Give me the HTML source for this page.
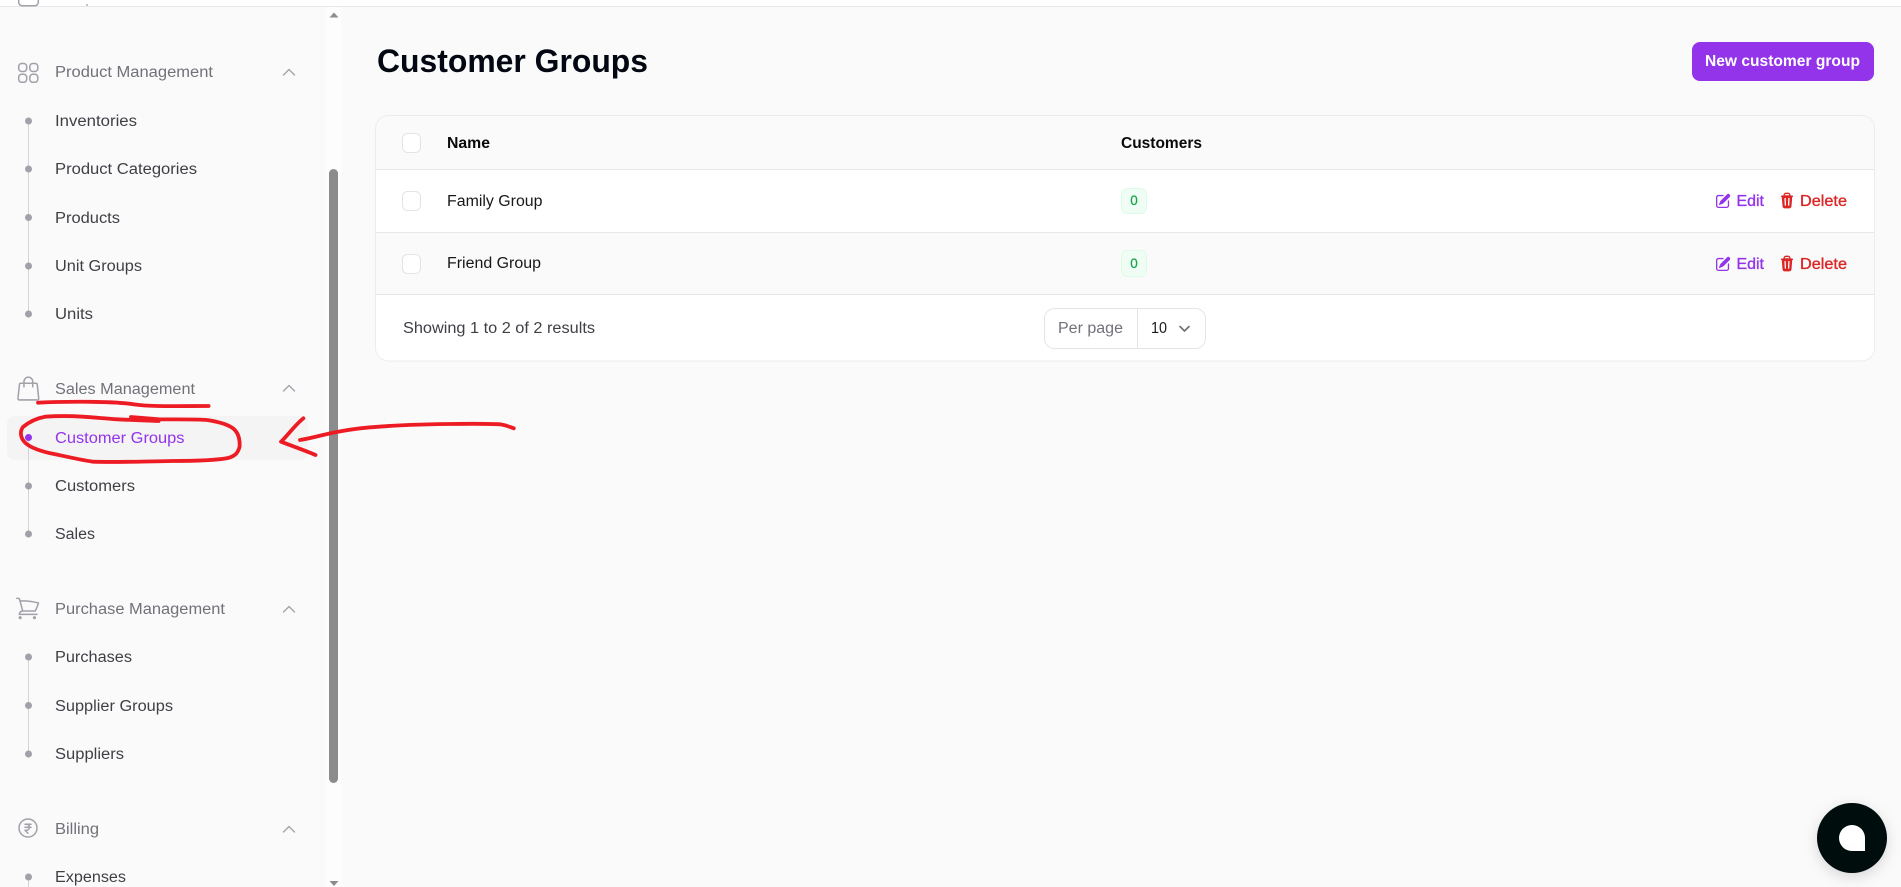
<!DOCTYPE html>
<html lang="en"><head><meta charset="utf-8"><title>Customer Groups</title>
<style>
html,body{margin:0;padding:0;width:1901px;height:887px;overflow:hidden;background:#fafafa}
svg{display:block;font-family:"Liberation Sans",sans-serif}
.n{font-size:15.5px;fill:#3f3f46}
.g{font-size:15.5px;fill:#71717a}
.b{font-size:15.5px;font-weight:700;fill:#09090b}
.t{font-size:15.5px;fill:#18181b}
.i{fill:none;stroke:#a1a1aa;stroke-width:1.5;stroke-linecap:round;stroke-linejoin:round}
.c{fill:none;stroke:#a1a1aa;stroke-width:1.3;stroke-linecap:round;stroke-linejoin:round}
.d{fill:#a1a1aa}
.l{stroke:#d4d4d8;stroke-width:1}
.cb{fill:#fff;stroke:#e4e4e7;stroke-width:1}
.r{fill:none;stroke:#ed1c24;stroke-width:3.8;stroke-linecap:round;stroke-linejoin:round}
.e{font-size:15.5px;fill:#9333ea;stroke:#9333ea;stroke-width:.35}
.x{font-size:15.5px;fill:#dc2626;stroke:#dc2626;stroke-width:.35}
</style></head><body>
<svg width="1901" height="887" viewBox="0 0 1901 887" xmlns="http://www.w3.org/2000/svg">
<defs>
<clipPath id="card"><rect x="375.5" y="115.5" width="1499" height="245.5" rx="13"/></clipPath>
<filter id="sh" x="-50%" y="-50%" width="200%" height="200%"><feDropShadow dx="0" dy="4" stdDeviation="7" flood-color="#000" flood-opacity=".14"/></filter>
<g id="pen"><path fill="#9333ea" d="m5.433 13.917 1.262-3.155A4 4 0 0 1 7.58 9.42l6.92-6.918a2.121 2.121 0 0 1 3 3l-6.92 6.918c-.383.383-.84.685-1.343.886l-3.154 1.262a.5.5 0 0 1-.65-.65Z"/><path fill="#9333ea" d="M3.5 5.75c0-.69.56-1.25 1.25-1.25H10A.75.75 0 0 0 10 3H4.75A2.75 2.75 0 0 0 2 5.75v9.5A2.75 2.75 0 0 0 4.75 18h9.5A2.75 2.75 0 0 0 17 15.25V10a.75.75 0 0 0-1.5 0v5.25c0 .69-.56 1.25-1.25 1.25h-9.5c-.69 0-1.25-.56-1.25-1.25v-9.5Z"/></g>
<g id="trash"><path fill="#dc2626" fill-rule="evenodd" d="M8.75 1A2.75 2.75 0 0 0 6 3.75v.443c-.795.077-1.584.176-2.365.298a.75.75 0 1 0 .23 1.482l.149-.022.841 10.518A2.75 2.75 0 0 0 7.596 19h4.807a2.75 2.75 0 0 0 2.742-2.53l.841-10.52.149.023a.75.75 0 0 0 .23-1.482A41.03 41.03 0 0 0 14 4.193V3.75A2.75 2.75 0 0 0 11.25 1h-2.5ZM10 4c.84 0 1.673.025 2.5.075V3.75c0-.69-.56-1.25-1.25-1.25h-2.5c-.69 0-1.25.56-1.25 1.25v.325C8.327 4.025 9.16 4 10 4ZM8.58 7.72a.75.75 0 0 0-1.5.06l.3 7.5a.75.75 0 1 0 1.5-.06l-.3-7.5Zm4.34.06a.75.75 0 1 0-1.5-.06l-.3 7.5a.75.75 0 1 0 1.5.06l.3-7.5Z"/></g>
</defs>

<rect width="1901" height="887" fill="#fafafa"/>
<!-- top strip -->
<rect width="1901" height="6" fill="#fff"/>
<rect y="6" width="1901" height="1" fill="#e8e8ea"/>
<rect x="326" y="7" width="15" height="880" fill="#fdfdfd"/>
<path d="M18.7 0v2.5a3.5 3.5 0 0 0 3.5 3.3h12.6a3.5 3.5 0 0 0 3.5-3.3V0" fill="none" stroke="#a1a1aa" stroke-width="1.5"/>
<rect x="86" y="4" width="2" height="2" fill="#c4c4c8"/>

<!-- scrollbar -->
<path d="M329.500 17.500 334 12.500 338.500 17.500Z" fill="#8c8c8c"/>
<rect x="329" y="169" width="9" height="614" rx="4.500" fill="#8c8c8c"/>
<path d="M329.500 881 338.500 881 334 886Z" fill="#8c8c8c"/>

<!-- sidebar active -->
<rect x="7" y="416" width="301" height="44" rx="8" fill="#f4f4f5"/>

<!-- connecting lines -->
<line class="l" x1="28.500" y1="121" x2="28.500" y2="314"/>
<line class="l" x1="28.500" y1="437" x2="28.500" y2="534"/>
<line class="l" x1="28.500" y1="657" x2="28.500" y2="754"/>
<line class="l" x1="28.500" y1="877" x2="28.500" y2="887"/>

<!-- product management -->
<g class="i"><rect x="18.700" y="63.500" width="8" height="8" rx="3"/><rect x="29.800" y="63.500" width="8" height="8" rx="3"/><rect x="18.700" y="74.300" width="8" height="8" rx="3"/><rect x="29.800" y="74.300" width="8" height="8" rx="3"/></g>
<text class="g" x="55" y="77" textLength="158" lengthAdjust="spacingAndGlyphs">Product Management</text>
<path class="c" d="M283.500 75 289 69.500 294.500 75"/>
<circle class="d" cx="28.500" cy="121" r="3.500"/><text class="n" x="55" y="126" textLength="82" lengthAdjust="spacingAndGlyphs">Inventories</text>
<circle class="d" cx="28.500" cy="169" r="3.500"/><text class="n" x="55" y="174" textLength="142" lengthAdjust="spacingAndGlyphs">Product Categories</text>
<circle class="d" cx="28.500" cy="217.500" r="3.500"/><text class="n" x="55" y="223" textLength="65" lengthAdjust="spacingAndGlyphs">Products</text>
<circle class="d" cx="28.500" cy="266" r="3.500"/><text class="n" x="55" y="271" textLength="87" lengthAdjust="spacingAndGlyphs">Unit Groups</text>
<circle class="d" cx="28.500" cy="314" r="3.500"/><text class="n" x="55" y="319" textLength="38" lengthAdjust="spacingAndGlyphs">Units</text>

<!-- sales management -->
<g transform="translate(14.300 374.500) scale(1.17)"><path class="i" stroke-width="1.300" style="stroke-width:1.300" d="M15.750 10.500V6a3.750 3.750 0 1 0-7.500 0v4.500m11.356-1.993 1.263 12c.07.665-.45 1.243-1.119 1.243H4.250a1.125 1.125 0 0 1-1.120-1.243l1.264-12A1.125 1.125 0 0 1 5.513 7.500h12.974c.576 0 1.059.435 1.119 1.007Z"/></g>
<text class="g" x="55" y="394" textLength="140" lengthAdjust="spacingAndGlyphs">Sales Management</text>
<path class="c" d="M283.500 391 289 385.500 294.500 391"/>
<circle cx="28.500" cy="437.500" r="3.500" fill="#9333ea"/><text x="55" y="443" font-size="15.500" fill="#9333ea" textLength="129.500" lengthAdjust="spacingAndGlyphs">Customer Groups</text>
<circle class="d" cx="28.500" cy="486" r="3.500"/><text class="n" x="55" y="491" textLength="80" lengthAdjust="spacingAndGlyphs">Customers</text>
<circle class="d" cx="28.500" cy="534" r="3.500"/><text class="n" x="55" y="539" textLength="40" lengthAdjust="spacingAndGlyphs">Sales</text>

<!-- purchase management -->
<g transform="translate(14.300 595) scale(1.120)"><path class="i" style="stroke-width:1.350" d="M2.250 3h1.386c.51 0 .955.343 1.087.835l.383 1.437M7.500 14.250a3 3 0 0 0-3 3h15.750m-12.750-3h11.218c1.121-2.300 2.100-4.684 2.924-7.138a60.114 60.114 0 0 0-16.536-1.840M7.500 14.250 5.106 5.272M6 20.250a.75.75 0 1 1-1.500 0 .75.75 0 0 1 1.500 0Zm12.750 0a.75.75 0 1 1-1.500 0 .75.75 0 0 1 1.500 0Z"/></g>
<text class="g" x="55" y="614" textLength="170" lengthAdjust="spacingAndGlyphs">Purchase Management</text>
<path class="c" d="M283.500 612 289 606.500 294.500 612"/>
<circle class="d" cx="28.500" cy="657" r="3.500"/><text class="n" x="55" y="662" textLength="77" lengthAdjust="spacingAndGlyphs">Purchases</text>
<circle class="d" cx="28.500" cy="705.500" r="3.500"/><text class="n" x="55" y="711" textLength="118" lengthAdjust="spacingAndGlyphs">Supplier Groups</text>
<circle class="d" cx="28.500" cy="754" r="3.500"/><text class="n" x="55" y="759" textLength="69" lengthAdjust="spacingAndGlyphs">Suppliers</text>

<!-- billing -->
<g transform="translate(16 816)"><path class="i" d="M15 8.250H9m6 3H9m3 6-3-3h1.500a3 3 0 1 0 0-6M21 12a9 9 0 1 1-18 0 9 9 0 0 1 18 0Z"/></g>
<text class="g" x="55" y="834" textLength="44" lengthAdjust="spacingAndGlyphs">Billing</text>
<path class="c" d="M283.500 832 289 826.500 294.500 832"/>
<circle class="d" cx="28.500" cy="877" r="3.500"/><text class="n" x="55" y="882" textLength="71" lengthAdjust="spacingAndGlyphs">Expenses</text>

<!-- header -->
<text x="377" y="72" font-size="32" font-weight="700" fill="#030712" textLength="271" lengthAdjust="spacingAndGlyphs">Customer Groups</text>
<rect x="1692" y="42" width="182" height="39" rx="8" fill="#9333ea"/>
<text x="1705" y="66" font-size="15.500" font-weight="700" fill="#fff" textLength="155" lengthAdjust="spacingAndGlyphs">New customer group</text>

<!-- card -->
<g clip-path="url(#card)">
<rect x="375" y="115" width="1500" height="54" fill="#fafafa"/>
<rect x="375" y="170" width="1500" height="62" fill="#fff"/>
<rect x="375" y="233" width="1500" height="61" fill="#fafafa"/>
<rect x="375" y="295" width="1500" height="67" fill="#fff"/>
<rect x="375" y="169" width="1500" height="1" fill="#e5e7eb"/>
<rect x="375" y="232" width="1500" height="1" fill="#e5e7eb"/>
<rect x="375" y="294" width="1500" height="1" fill="#e5e7eb"/>
</g>
<rect x="375.500" y="115.500" width="1499" height="245.500" rx="13" fill="none" stroke="#ececee"/>

<rect class="cb" x="402.500" y="133.500" width="18" height="19" rx="5"/>
<rect class="cb" x="402.500" y="191.500" width="18" height="19" rx="5"/>
<rect class="cb" x="402.500" y="254.500" width="18" height="19" rx="5"/>

<text class="b" x="447" y="148" textLength="43" lengthAdjust="spacingAndGlyphs">Name</text>
<text class="b" x="1121" y="148" textLength="81" lengthAdjust="spacingAndGlyphs">Customers</text>
<text class="t" x="447" y="206" textLength="95.500" lengthAdjust="spacingAndGlyphs">Family Group</text>
<text class="t" x="447" y="268" textLength="94" lengthAdjust="spacingAndGlyphs">Friend Group</text>

<rect x="1121.500" y="188.500" width="25" height="25" rx="6" fill="#f0fdf4" stroke="#dcfce7"/>
<text x="1134" y="205" font-size="13.500" text-anchor="middle" fill="#16a34a" stroke="#16a34a" stroke-width=".2">0</text>
<rect x="1121.500" y="250.500" width="25" height="26" rx="6" fill="#f0fdf4" stroke="#dcfce7"/>
<text x="1134" y="268" font-size="13.500" text-anchor="middle" fill="#16a34a" stroke="#16a34a" stroke-width=".2">0</text>

<!-- actions -->
<use href="#pen" transform="translate(1714.250 192.250) scale(.875)"/>
<text class="e" x="1736.500" y="206" textLength="27.500" lengthAdjust="spacingAndGlyphs">Edit</text>
<use href="#trash" transform="translate(1778.250 191.750) scale(.875)"/>
<text class="x" x="1800" y="206" textLength="47" lengthAdjust="spacingAndGlyphs">Delete</text>
<use href="#pen" transform="translate(1714.250 255.250) scale(.875)"/>
<text class="e" x="1736.500" y="269" textLength="27.500" lengthAdjust="spacingAndGlyphs">Edit</text>
<use href="#trash" transform="translate(1778.250 254.750) scale(.875)"/>
<text class="x" x="1800" y="269" textLength="47" lengthAdjust="spacingAndGlyphs">Delete</text>

<!-- footer -->
<text x="403" y="333" font-size="15.500" fill="#3f3f46" textLength="192" lengthAdjust="spacingAndGlyphs">Showing 1 to 2 of 2 results</text>
<rect x="1044.500" y="308.500" width="161" height="40" rx="10" fill="#fff" stroke="#e4e4e7"/>
<line x1="1137.500" y1="309" x2="1137.500" y2="348" stroke="#e4e4e7"/>
<text x="1058" y="333" font-size="15.500" fill="#71717a" textLength="65" lengthAdjust="spacingAndGlyphs">Per page</text>
<text x="1151" y="333" font-size="16" fill="#18181b" textLength="16" lengthAdjust="spacingAndGlyphs">10</text>
<path d="M1180 326.500 1184.500 331 1189 326.500" fill="none" stroke="#71717a" stroke-width="1.700" stroke-linecap="round" stroke-linejoin="round"/>

<!-- annotation -->
<path class="r" d="M38 402.700C60 401.500 69 401.700 90 401.800C110 402 124 402.700 135 404.500C150 406.700 175 406 208.600 406"/>
<path class="r" d="M131 417L158.600 419.300C175 419.500 195 419 207 420C217 421.500 226 424 231 427C238 431 240 439 239.600 446.700C238 453 235 456 228 458C215 460.500 195 461 172 461C140 461.500 115 462.500 93 461.700C75 459 60 455 48 452.700C37 450 29 447 24.500 442C20 437 20 431 23 427C30 421 38 418 45 416.700C60 415.700 72 416 83 416.700C95 417.500 105 418.500 117 419.300C130 420 145 420.500 158.600 421"/>
<path class="r" d="M303.400 418.300C295 425 288 435 281 441.700C292 446 304 450 315.500 455"/>
<path class="r" d="M300 440C313 438 325 434 338 431.700C350 429.500 365 427.500 379 426.700C400 425 425 424.300 448 424C465 423.800 485 423.500 500 424.300C505 425 510 427 513.800 428.300"/>

<!-- chat bubble -->
<circle cx="1852" cy="838" r="35" fill="#02080c" filter="url(#sh)"/>
<path d="M1852 825a13 13 0 0 1 13 13v13h-13a13 13 0 0 1 0-26Z" fill="#fff"/>
</svg>
</body></html>
